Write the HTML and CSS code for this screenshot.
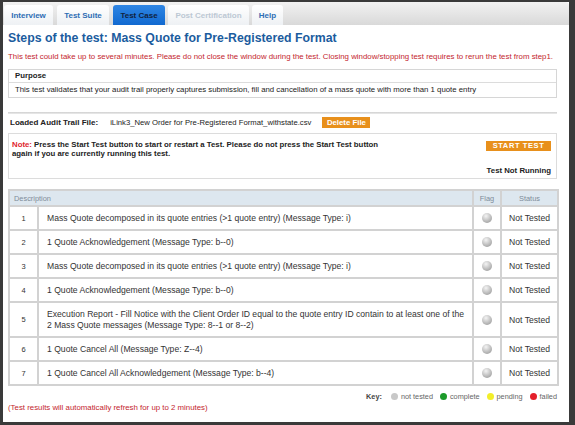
FILE: index.html
```html
<!DOCTYPE html>
<html>
<head>
<meta charset="utf-8">
<link rel="stylesheet" href="styles.css">
</head>
<body>
<div class="window">
  <div class="tabs">
    <div class="tab t1">Interview</div>
    <div class="tab t2">Test Suite</div>
    <div class="tab t3 active">Test Case</div>
    <div class="tab t4 disabled">Post Certification</div>
    <div class="tab t5">Help</div>
  </div>
  <div class="content">
    <h1 class="title">Steps of the test: Mass Quote for Pre-Registered Format</h1>
    <p class="warn">This test could take up to several minutes. Please do not close the window during the test. Closing window/stopping test requires to rerun the test from step1.</p>
    <div class="purpose">
      <div class="purpose-head">Purpose</div>
      <div class="purpose-body">This test validates that your audit trail properly captures submission, fill and cancellation of a mass quote with more than 1 quote entry</div>
    </div>
    <div class="sep"></div>
    <div class="loaded">
      <span class="loaded-label">Loaded Audit Trail File:</span>
      <span class="loaded-file">iLink3_New Order for Pre-Registered Format_withstate.csv</span>
      <span class="btn btn-delete">Delete File</span>
    </div>
    <div class="note">
      <div class="note-text"><span class="note-label">Note:</span> Press the Start Test button to start or restart a Test. Please do not press the Start Test button again if you are currently running this test.</div>
      <div class="note-side">
        <span class="btn btn-start">START TEST</span>
        <span class="status-text">Test Not Running</span>
      </div>
    </div>
    <table class="steps">
      <colgroup>
        <col class="c-num"><col class="c-desc"><col class="c-flag"><col class="c-status">
      </colgroup>
      <thead>
        <tr><th colspan="2" class="th-desc">Description</th><th>Flag</th><th>Status</th></tr>
      </thead>
      <tbody>
        <tr><td class="num">1</td><td class="desc">Mass Quote decomposed in its quote entries (&gt;1 quote entry) (Message Type: i)</td><td class="flag"><span class="ball"></span></td><td class="st">Not Tested</td></tr>
        <tr><td class="num">2</td><td class="desc">1 Quote Acknowledgement (Message Type: b--0)</td><td class="flag"><span class="ball"></span></td><td class="st">Not Tested</td></tr>
        <tr><td class="num">3</td><td class="desc">Mass Quote decomposed in its quote entries (&gt;1 quote entry) (Message Type: i)</td><td class="flag"><span class="ball"></span></td><td class="st">Not Tested</td></tr>
        <tr><td class="num">4</td><td class="desc">1 Quote Acknowledgement (Message Type: b--0)</td><td class="flag"><span class="ball"></span></td><td class="st">Not Tested</td></tr>
        <tr class="tall"><td class="num">5</td><td class="desc">Execution Report - Fill Notice with the Client Order ID equal to the quote entry ID contain to at least one of the 2 Mass Quote messages (Message Type: 8--1 or 8--2)</td><td class="flag"><span class="ball"></span></td><td class="st">Not Tested</td></tr>
        <tr><td class="num">6</td><td class="desc">1 Quote Cancel All (Message Type: Z--4)</td><td class="flag"><span class="ball"></span></td><td class="st">Not Tested</td></tr>
        <tr><td class="num">7</td><td class="desc">1 Quote Cancel All Acknowledgement (Message Type: b--4)</td><td class="flag"><span class="ball"></span></td><td class="st">Not Tested</td></tr>
      </tbody>
    </table>
    <div class="key">
      <span class="key-label">Key:</span>
      <span class="dot d-gray"></span><span>not tested</span>
      <span class="dot d-green"></span><span>complete</span>
      <span class="dot d-yellow"></span><span>pending</span>
      <span class="dot d-red"></span><span>failed</span>
    </div>
    <p class="refresh">(Test results will automatically refresh for up to 2 minutes)</p>
  </div>
</div>
</body>
</html>
```
FILE: styles.css
```css
html, body {
  margin: 0;
  padding: 0;
  background: #3a3a3a;
  font-family: "Liberation Sans", Arial, sans-serif;
}
.window {
  margin: 2px 6px 0 3px;
  height: 420px;
  background: #ffffff;
  overflow: hidden;
}
.tabs {
  display: flex;
  gap: 3px;
  height: 20px;
  padding: 3px 0 0 1px;
  background: linear-gradient(#f2f2f2, #d9d9d9);
  border-radius: 0 4px 0 0;
}
.tab {
  box-sizing: border-box;
  height: 20px;
  line-height: 21px;
  font-size: 8px;
  font-weight: bold;
  white-space: nowrap;
  text-align: center;
  color: #2e6db4;
  background: linear-gradient(#ffffff, #eef1f4);
  border-radius: 3px 3px 0 0;
}
.t1 { width: 49px; }
.t2 { width: 52px; margin-left: 1px; }
.t3 { width: 52px; margin-left: 1px; }
.t4 { width: 81px; }
.t5 { width: 31px; }
.tab.active {
  background: linear-gradient(#2f86e4, #1169d0);
  color: #10233f;
}
.tab.disabled {
  color: #bcc8d4;
}
.content {
  padding: 0 12px 0 5px;
}
.title {
  margin: 5px 0 0;
  font-size: 12.3px;
  line-height: 16px;
  font-weight: bold;
  color: #1b5c9e;
}
.warn {
  margin: 6px 0 0;
  font-size: 7.85px;
  line-height: 10px;
  color: #c4262e;
  white-space: nowrap;
}
.purpose {
  margin-top: 7px;
  border: 1px solid #d6d6d6;
}
.purpose-head {
  height: 12px;
  line-height: 12px;
  padding-left: 6px;
  font-size: 7.8px;
  font-weight: bold;
  color: #222;
  border-bottom: 1px solid #dcdcdc;
}
.purpose-body {
  height: 14px;
  line-height: 14px;
  padding-left: 6px;
  font-size: 7.8px;
  color: #222;
}
.sep {
  margin-top: 14px;
  height: 2px;
  background: linear-gradient(#cfcfcf, #ececec);
}
.loaded {
  display: flex;
  align-items: center;
  height: 13px;
  margin-top: 2px;
  padding-left: 2px;
}
.loaded-label {
  font-size: 8px;
  font-weight: bold;
  color: #222;
}
.loaded-file {
  margin-left: 12px;
  font-size: 7.7px;
  color: #222;
}
.btn {
  display: inline-block;
  background: #e8901c;
  color: #fff;
  font-weight: bold;
  text-align: center;
}
.btn-delete {
  margin-left: 11px;
  width: 48px;
  height: 11px;
  line-height: 11px;
  font-size: 7.8px;
}
.note {
  display: flex;
  justify-content: space-between;
  margin-top: 4px;
  height: 44px;
  border: 1px solid #dcdcdc;
}
.note-text {
  width: 385px;
  padding: 6px 0 0 3px;
  font-size: 7.8px;
  line-height: 9px;
  font-weight: bold;
  color: #222;
}
.note-label {
  color: #e0262e;
}
.note-side {
  display: flex;
  flex-direction: column;
  align-items: flex-end;
  justify-content: space-between;
  padding: 7px 5px 3px 0;
}
.btn-start {
  width: 65px;
  height: 10px;
  line-height: 10px;
  font-size: 7.5px;
  letter-spacing: 0.6px;
}
.status-text {
  font-size: 7.8px;
  font-weight: bold;
  color: #222;
}
.steps {
  margin-top: 10px;
  width: 549px;
  border-collapse: collapse;
  table-layout: fixed;
  border: 2px solid #d2d2d2;
}
.c-num { width: 29px; }
.c-desc { width: 435px; }
.c-flag { width: 28px; }
.c-status { width: 57px; }
.steps th {
  height: 14px;
  padding: 0;
  background: #dde7ef;
  font-size: 7.4px;
  font-weight: normal;
  color: #7d8c99;
  text-align: center;
  border: 2px solid #d2d2d2;
}
.steps th.th-desc {
  text-align: left;
  padding-left: 4px;
}
.steps td {
  height: 22px;
  padding: 0;
  border: 2px solid #d2d2d2;
  font-size: 8.6px;
  color: #333;
}
.steps tr.tall td {
  height: 33px;
}
.steps td.num {
  text-align: center;
  font-size: 7.5px;
}
.steps td.desc {
  padding: 0 6px 0 8px;
  line-height: 11px;
}
.steps td.flag {
  text-align: center;
}
.steps td.st {
  text-align: center;
}
.ball {
  display: inline-block;
  width: 10px;
  height: 10px;
  border-radius: 50%;
  vertical-align: middle;
  background: radial-gradient(circle at 40% 30%, #f4f4f4 0%, #bdbdbd 55%, #8e8e8e 100%);
}
.key {
  display: flex;
  justify-content: flex-end;
  align-items: center;
  gap: 3px;
  height: 12px;
  margin-top: 4px;
  font-size: 7.3px;
  color: #666;
}
.key-label {
  font-weight: bold;
  color: #444;
  margin-right: 2px;
}
.dot {
  display: inline-block;
  width: 7px;
  height: 7px;
  border-radius: 50%;
  margin-left: 4px;
}
.d-gray { background: #c8c8c8; }
.d-green { background: #1c9a2a; }
.d-yellow { background: #f2ee2a; }
.d-red { background: #e4202a; }
.refresh {
  margin: 1px 0 0;
  font-size: 7.85px;
  line-height: 10px;
  color: #c4262e;
}
```
